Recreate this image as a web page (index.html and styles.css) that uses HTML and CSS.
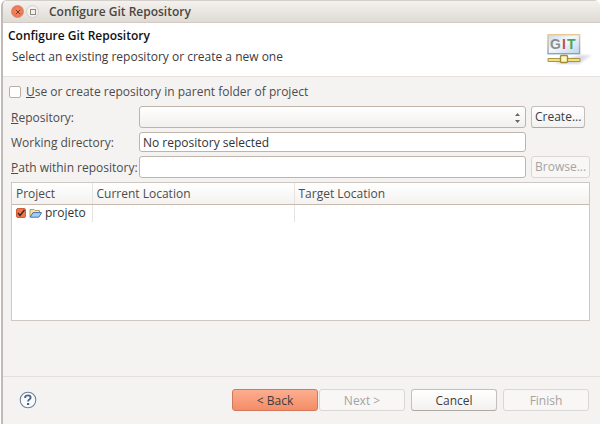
FILE: index.html
```html
<!DOCTYPE html>
<html lang="en">
<head>
<meta charset="utf-8">
<title>Configure Git Repository</title>
<link rel="stylesheet" href="styles.css">
</head>
<body>
<div class="window">
  <div class="titlebar">
    <button class="winbtn close" aria-label="Close"><svg width="6" height="6" viewBox="0 0 6 6"><path d="M.8.8l4.4 4.4M5.2.8L.8 5.2" stroke="#7b3523" stroke-width="1"/></svg></button>
    <button class="winbtn" aria-label="Maximize"><svg width="6" height="6" viewBox="0 0 6 6"><rect x=".5" y=".5" width="5" height="5" fill="none" stroke="#8f8982"/></svg></button>
    <span class="caption">Configure Git Repository</span>
  </div>
  <header class="banner">
    <div class="intro">
      <h1>Configure Git Repository</h1>
      <p>Select an existing repository or create a new one</p>
    </div>
    <svg class="logo" width="48" height="32" viewBox="0 0 48 32" role="img" aria-label="GIT">
      <defs>
        <linearGradient id="screen" x1="0" y1="0" x2="1" y2="1"><stop offset="0" stop-color="#c9dced"/><stop offset=".45" stop-color="#f4f8fc"/><stop offset="1" stop-color="#bcd2ea"/></linearGradient>
        <linearGradient id="frame" x1="0" y1="0" x2="0" y2="1"><stop offset="0" stop-color="#eac795"/><stop offset="1" stop-color="#88a3bb"/></linearGradient>
        <linearGradient id="shade" x1="0" y1="0" x2="1" y2="0"><stop offset="0" stop-color="#bcb8cc"/><stop offset="1" stop-color="#e9e7ef"/></linearGradient>
        <filter id="soft"><feGaussianBlur stdDeviation=".8"/></filter>
      </defs>
      <path d="M7 29L34 21L45 21L32 30Z" fill="url(#shade)" filter="url(#soft)"/>
      <rect x="1" y=".7" width="31.6" height="19" fill="url(#screen)" stroke="url(#frame)" stroke-width="1.4"/>
      <g class="letters"><text x="3" y="15" fill="#8e8e8e">G</text><text x="15" y="15" fill="#c44c50">I</text><text x="20" y="15" fill="#44a85a">T</text></g>
      <path d="M1 24.5h32v3H1z" fill="#f1e27f" stroke="#a79745"/>
      <rect x="13.5" y="21.5" width="7" height="7" rx="1" fill="#fff6c4" stroke="#a08b38" stroke-width="1.4"/>
    </svg>
  </header>
  <main>
    <label class="check"><input type="checkbox"><span><u>U</u>se or create repository in parent folder of project</span></label>
    <div class="form">
      <label for="repo"><u>R</u>epository:</label>
      <div class="combo">
        <select id="repo"><option></option></select>
        <svg width="5" height="10" viewBox="0 0 5 10"><path d="M0 3L2.5 0L5 3zM0 7L2.5 10L5 7z" fill="#666"/></svg>
      </div>
      <button class="btn side">Create...</button>
      <label for="dir">Working directory:</label>
      <input class="short" id="dir" type="text" value="No repository selected" readonly>
      <span></span>
      <label for="path"><u>P</u>ath within repository:</label>
      <input id="path" type="text">
      <button class="btn side" disabled>Browse...</button>
    </div>
    <div class="list">
      <table>
        <thead><tr><th class="project">Project</th><th class="current">Current Location</th><th>Target Location</th></tr></thead>
        <tbody><tr>
          <td><label class="item"><input type="checkbox" checked>
            <svg width="13" height="10" viewBox="0 0 13 10"><path d="M1 9V1.5h4l1 1h4.5V5" fill="#f5e3a0" stroke="#b69c58"/><path d="M1.2 9.2L4 4.6h8.6L9.8 9.2z" fill="#a9ccf4" stroke="#3f74b8"/></svg>
            <span>projeto</span></label></td>
          <td></td><td></td>
        </tr></tbody>
      </table>
    </div>
  </main>
  <footer>
    <button class="help" aria-label="Help"><svg width="18" height="18" viewBox="0 0 18 18"><circle cx="9" cy="9" r="7.8" fill="#fafbfd" stroke="#6f819e" stroke-width="1.1"/><path d="M6.2 7V5.7Q6.8 4.4 9 4.4Q11.6 4.4 11.6 6.5Q11.6 7.7 10.3 8.5Q9.1 9.3 9.1 10.5" fill="none" stroke="#4d6285" stroke-width="1.9"/><path d="M8 12h2.2v2H8z" fill="#4d6285"/></svg></button>
    <div class="pair"><button class="btn default">&lt; Back</button><button class="btn" disabled>Next &gt;</button></div>
    <button class="btn">Cancel</button>
    <button class="btn" disabled>Finish</button>
  </footer>
</div>
</body>
</html>
```
FILE: styles.css
```css
* { box-sizing: border-box; }
body {
  margin: 0;
  background: #fff;
  color: #4c4c4c;
  font: 12px/16px "Open Sans", "Noto Sans", sans-serif;
}
button, input, select { font: inherit; color: inherit; margin: 0; }
.window {
  min-height: calc(100vh - 1px);
  display: flex;
  flex-direction: column;
  margin-left: 1px;
  border-left: 2px solid #c0bbb6;
  border-radius: 6px 6px 0 0;
  background: #f5f3f2;
  overflow: hidden;
}
.titlebar {
  height: 23px;
  display: flex;
  align-items: center;
  gap: 2px;
  padding: 0 8px;
  border-top: 1px solid #d4cfca;
  border-bottom: 1px solid #d2cac3;
  background: linear-gradient(#f4f2ef, #dfdad4);
}
.winbtn {
  width: 13px;
  height: 13px;
  display: grid;
  place-items: center;
  padding: 0;
  border: 1px solid #d3cec8;
  border-radius: 50%;
  background: #f3f1ee;
}
.close { border-color: #d08a70; background: radial-gradient(#f68c6c, #ee6a43); }
.caption { margin-left: 8px; font-weight: 600; color: #4b4641; }
.banner {
  height: 54px;
  display: flex;
  justify-content: space-between;
  padding: 5px;
  border-bottom: 1px solid #e6e2df;
  background: #fff;
}
.banner h1 { margin: 0; font-size: 12px; line-height: 16px; font-weight: 600; color: #111; }
.banner p { margin: 5px 4px 0; color: #3c3c3c; }
.logo { margin-top: 6px; }
.letters { font: bold 14px "Liberation Sans", sans-serif; }
main { flex: 1; padding: 7px 10px 0 8px; }
.check { display: flex; align-items: center; gap: 5px; margin-left: -2px; }
.check input {
  appearance: none;
  width: 12px;
  height: 12px;
  border: 1px solid #b9aea5;
  border-radius: 2px;
  background: #fff;
}
.form {
  display: grid;
  grid-template-columns: 123px 1fr 59px;
  column-gap: 5px;
  row-gap: 4px;
  align-items: center;
  margin-top: 6px;
}
.form > label { padding-top: 2px; white-space: nowrap; }
.form input, .combo select {
  width: 100%;
  height: 22px;
  padding: 0 3px;
  border: 1px solid #c0b4aa;
  border-radius: 3px;
  background: #fff;
}
.form .short { height: 20px; color: #333; }
.combo { position: relative; display: grid; }
.combo select { appearance: none; background: linear-gradient(#fff, #f2f0ee); }
.combo svg { position: absolute; right: 6px; top: 7px; pointer-events: none; }
.btn {
  width: 86px;
  height: 22px;
  padding: 1px 0 0;
  border: 1px solid #c6bfb9;
  border-bottom-color: #b0a8a2;
  border-radius: 3px;
  background: linear-gradient(#fff, #f3f1f0);
  color: #3c3c3c;
}
.btn:disabled { border-color: #dcd7d3; background: #f8f7f6; color: #a5a3a1; }
.side { width: auto; padding: 0 3px; justify-self: start; }
.default { border-color: #d07a5b; background: linear-gradient(#fcae91, #f58c66); }
.list {
  height: 139px;
  margin-top: 4px;
  border: 1px solid #cfc8c2;
  background: #fff;
}
table { width: 100%; border-collapse: collapse; table-layout: fixed; }
th, td { padding: 0 4px; text-align: left; font-weight: normal; border-right: 1px solid #e6e4e2; }
th:last-child, td:last-child { border-right: 0; }
th { height: 21px; padding-top: 2px; border-bottom: 1px solid #c9b9aa; background: linear-gradient(#fff, #f3f2f0); }
td { height: 18px; }
.project { width: 80px; }
.current { width: 202px; }
.item { display: flex; align-items: center; gap: 3px; color: #333; }
.item input {
  appearance: none;
  width: 10px;
  height: 10px;
  border: 1px solid #cf5f3b;
  border-radius: 2px;
  background: #f0754c url("data:image/svg+xml,%3Csvg xmlns='http://www.w3.org/2000/svg' viewBox='0 0 8 8'%3E%3Cpath d='M1 4l2 2.5L7.5 1' fill='none' stroke='%23402820' stroke-width='1.5'/%3E%3C/svg%3E");
}
footer {
  height: 48px;
  display: flex;
  align-items: center;
  gap: 6px;
  padding: 0 11px 1px 16px;
  border-top: 1px solid #e3dfdb;
}
.help { margin-right: auto; padding: 0; border: 0; background: none; display: grid; }
.pair { display: flex; gap: 1px; }
```
